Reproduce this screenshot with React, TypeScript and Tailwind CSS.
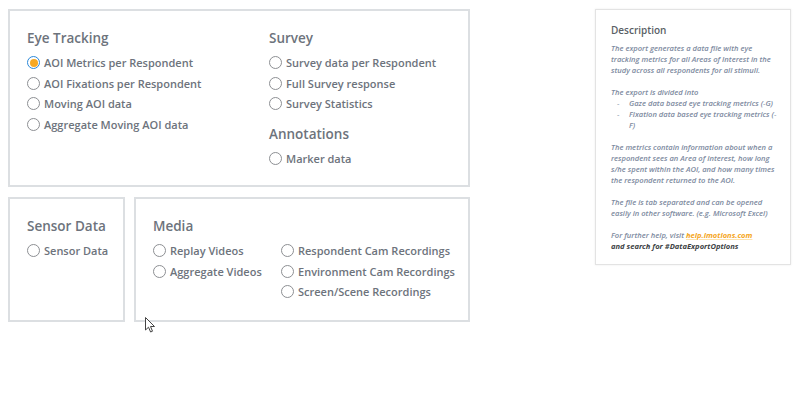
import React from "react";

const font = { fontFamily: '"Open Sans", "Noto Sans", sans-serif' };

function Radio({ label, checked }: { label: string; checked?: boolean }) {
  return (
    <div className="flex items-center h-[20.5px]">
      {checked ? (
        <span className="w-[13px] h-[13px] rounded-full border border-[#2b88d8] flex items-center justify-center bg-white">
          <span className="w-[8px] h-[8px] rounded-full bg-[#f7a823]" />
        </span>
      ) : (
        <span className="w-[13px] h-[13px] rounded-full border border-[#8d8f93] bg-white" />
      )}
      <span className="ml-[4px] text-[11px] font-semibold text-[#6d737c] leading-none whitespace-nowrap">
        {label}
      </span>
    </div>
  );
}

function Title({ children }: { children: React.ReactNode }) {
  return (
    <div className="text-[13.5px] font-semibold text-[#6d737c] leading-none mb-[7px]">{children}</div>
  );
}

export default function App() {
  return (
    <div className="w-[800px] h-[418px] bg-white flex relative" style={font}>
      <div className="ml-[8px] mt-[9px] w-[462px] flex flex-col gap-[10px]">
        <div className="h-[178px] border-2 border-[#dcdfe2] flex pl-[17px] pt-[21px]">
          <div className="w-[242px]">
            <Title>Eye Tracking</Title>
            <Radio label="AOI Metrics per Respondent" checked />
            <Radio label="AOI Fixations per Respondent" />
            <Radio label="Moving AOI data" />
            <Radio label="Aggregate Moving AOI data" />
          </div>
          <div>
            <Title>Survey</Title>
            <Radio label="Survey data per Respondent" />
            <Radio label="Full Survey response" />
            <Radio label="Survey Statistics" />
            <div className="mt-[14px]">
              <Title>Annotations</Title>
              <Radio label="Marker data" />
            </div>
          </div>
        </div>
        <div className="flex gap-[9px] h-[125px]">
          <div className="w-[117px] border-2 border-[#dcdfe2] pl-[17px] pt-[21px]">
            <Title>Sensor Data</Title>
            <Radio label="Sensor Data" />
          </div>
          <div className="flex-1 border-2 border-[#dcdfe2] pl-[17px] pt-[21px]">
            <Title>Media</Title>
            <div className="flex">
              <div className="w-[128px]">
                <Radio label="Replay Videos" />
                <Radio label="Aggregate Videos" />
              </div>
              <div>
                <Radio label="Respondent Cam Recordings" />
                <Radio label="Environment Cam Recordings" />
                <Radio label="Screen/Scene Recordings" />
              </div>
            </div>
          </div>
        </div>
      </div>
      <div className="ml-auto mr-[9px] mt-[9px] w-[196px] h-[256px] border border-[#e3e3e3] shadow-[0_0_2px_rgba(0,0,0,0.08)] pl-[15px] pr-[12px] pt-[15px]">
        <div className="text-[10px] font-semibold text-[#5a5f66] leading-none mb-[8px]">Description</div>
        <div className="text-[7.6px] italic font-semibold text-[#7d8aa0] leading-[11px]">
          <p>The export generates a data file with eye tracking metrics for all Areas of Interest in the study across all respondents for all stimuli.</p>
          <p className="mt-[11px]">The export is divided into</p>
          <div className="flex pl-[6px]"><span className="w-[12px] shrink-0">-</span><span>Gaze data based eye tracking metrics (-G)</span></div>
          <div className="flex pl-[6px]"><span className="w-[12px] shrink-0">-</span><span>Fixation data based eye tracking metrics (-F)</span></div>
          <p className="mt-[11px]">The metrics contain information about when a respondent sees an Area of Interest, how long s/he spent within the AOI, and how many times the respondent returned to the AOI.</p>
          <p className="mt-[11px]">The file is tab separated and can be opened easily in other software. (e.g. Microsoft Excel)</p>
          <p className="mt-[11px]">
            For further help, visit <span className="text-[#f5a623] font-bold underline decoration-[#fde3b0]">help.imotions.com</span>
            <br />
            <span className="text-[#3c3f44] font-bold">and search for #DataExportOptions</span>
          </p>
        </div>
      </div>
      <svg className="absolute left-[145px] top-[317px]" width="11" height="16" viewBox="0 0 11 16">
        <path d="M0.5 0.5 L0.5 13 L3.5 10.2 L5.6 15 L7.5 14.2 L5.5 9.5 L9.5 9.5 Z" fill="white" stroke="#444" strokeWidth="1" />
      </svg>
    </div>
  );
}
